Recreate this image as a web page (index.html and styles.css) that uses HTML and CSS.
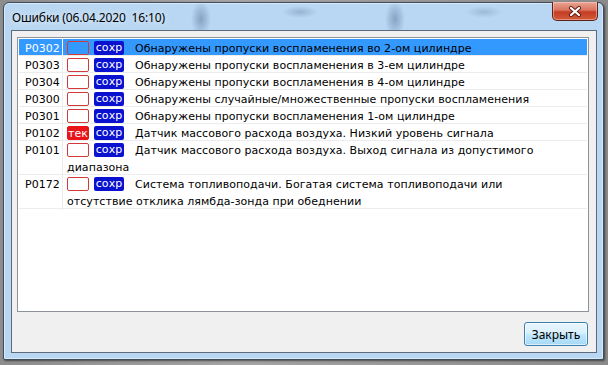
FILE: index.html
```html
<!DOCTYPE html>
<html lang="ru">

<head>
    <meta charset="UTF-8">
    <meta name="viewport" content="width=device-width, initial-scale=1.0">
    <title>Ошибки</title>
    <link rel="stylesheet" href="styles.css">
</head>

<body>
    <div class="window">
        <div class="titlebar">
            <span class="title">Ошибки (06.04.2020&nbsp; 16:10)</span>
            <button class="close" type="button">
                <svg width="14" height="11" viewBox="0 0 14 11">
                    <path d="M3 2 L11 9 M11 2 L3 9" stroke="#5a1d14" stroke-width="4" stroke-linecap="round" />
                    <path d="M3 2 L11 9 M11 2 L3 9" stroke="#fff" stroke-width="2.2" stroke-linecap="round" />
                </svg>
            </button>
        </div>

        <div class="client">
            <div class="listbox">
                <div class="row selected">
                    <div class="code">P0302</div>
                    <div class="desc"><span class="flag"></span><span class="saved">сохр</span>Обнаружены пропуски воспламенения во 2-ом цилиндре</div>
                </div>
                <div class="row">
                    <div class="code">P0303</div>
                    <div class="desc"><span class="flag"></span><span class="saved">сохр</span>Обнаружены пропуски воспламенения в 3-ем цилиндре</div>
                </div>
                <div class="row">
                    <div class="code">P0304</div>
                    <div class="desc"><span class="flag"></span><span class="saved">сохр</span>Обнаружены пропуски воспламенения в 4-ом цилиндре</div>
                </div>
                <div class="row">
                    <div class="code">P0300</div>
                    <div class="desc"><span class="flag"></span><span class="saved">сохр</span>Обнаружены случайные/множественные пропуски воспламенения</div>
                </div>
                <div class="row">
                    <div class="code">P0301</div>
                    <div class="desc"><span class="flag"></span><span class="saved">сохр</span>Обнаружены пропуски воспламенения 1-ом цилиндре</div>
                </div>
                <div class="row">
                    <div class="code">P0102</div>
                    <div class="desc"><span class="flag current">тек</span><span class="saved">сохр</span>Датчик массового расхода воздуха. Низкий уровень сигнала</div>
                </div>
                <div class="row">
                    <div class="code">P0101</div>
                    <div class="desc"><span class="flag"></span><span class="saved">сохр</span>Датчик массового расхода воздуха. Выход сигнала из допустимого диапазона</div>
                </div>
                <div class="row">
                    <div class="code">P0172</div>
                    <div class="desc"><span class="flag"></span><span class="saved">сохр</span>Система топливоподачи. Богатая система топливоподачи или отсутствие отклика лямбда-зонда при обеднении</div>
                </div>
            </div>

            <div class="footer">
                <button class="btn" type="button">Закрыть</button>
            </div>
        </div>
    </div>
</body>

</html>
```

FILE: styles.css
```css
/* General Styles */
body {
    margin: 0;
    width: 608px;
    height: 365px;
    overflow: hidden;
    background: linear-gradient(90deg, #8d8d8d 0%, #a4a4a4 40%, #8a8a8a 100%);
}

.window {
    margin: 2px 0 0 3px;
    width: 601px;
    height: 358px;
    box-sizing: border-box;
    border: 1px solid #3f4d5c;
    border-radius: 6px 6px 2px 2px;
    padding: 0 6px 6px 7px;
    display: flex;
    flex-direction: column;
    box-shadow: 1px 1px 2px rgba(0, 0, 0, 0.5), inset 0 0 0 1px rgba(255, 255, 255, 0.45);
    background:
        radial-gradient(ellipse 10px 18px at 197px 16px, rgba(70, 100, 140, 0.45), transparent),
        radial-gradient(ellipse 10px 18px at 391px 16px, rgba(70, 100, 140, 0.45), transparent),
        radial-gradient(ellipse 18px 6px at 296px 9px, rgba(70, 100, 140, 0.3), transparent),
        radial-gradient(ellipse 18px 6px at 480px 9px, rgba(70, 100, 140, 0.25), transparent),
        #b9d7f2;
}

/* Title bar */
.titlebar {
    height: 27px;
    flex-shrink: 0;
    display: flex;
    justify-content: space-between;
    align-items: flex-start;
}

.title {
    font-family: 'Noto Sans', Arial, sans-serif;
    font-size: 12px;
    line-height: 16px;
    letter-spacing: -0.15px;
    color: #000;
    margin: 7px 0 0 1px;
    text-shadow: 0 0 6px rgba(255, 255, 255, 0.9);
}

.close {
    width: 46px;
    height: 19px;
    margin: -1px -1px 0 0;
    padding: 0;
    border: 1px solid #5e2218;
    border-top: none;
    border-radius: 0 0 5px 5px;
    display: flex;
    align-items: center;
    justify-content: center;
    background: linear-gradient(#e8a596 0%, #d9745f 45%, #c53c22 55%, #d25a3b 100%);
    box-shadow: inset 0 0 0 1px rgba(255, 220, 210, 0.45);
}

/* Client area */
.client {
    flex: 1;
    border: 1px solid #5b6b7c;
    background-color: #f0f0f0;
    display: flex;
    flex-direction: column;
}

.listbox {
    margin: 6px 7px 0 5px;
    height: 275px;
    box-sizing: border-box;
    border: 1px solid #8e939a;
    background-color: #fff;
    padding: 1px;
    font-family: 'DejaVu Sans', Verdana, sans-serif;
    font-size: 11px;
    line-height: 17px;
    letter-spacing: 0.05px;
    color: #000;
}

.row {
    display: flex;
    box-shadow: inset 0 -1px #ececec;
}

.row.selected {
    background-color: #3399ff;
    color: #fff;
}

.code {
    width: 44px;
    flex-shrink: 0;
    box-sizing: border-box;
    padding: 1px 0 0 6px;
    margin-bottom: -1px;
    box-shadow: inset -1px 0 #ececec;
}

.row.selected .code {
    box-shadow: inset -1px 0 #fff;
}

.desc {
    flex: 1;
    padding: 1px 32px 0 4px;
    margin-bottom: -1px;
}

.row.selected .desc {
    color: #000;
}

.flag,
.saved {
    display: inline-block;
    vertical-align: top;
    height: 14px;
    margin-top: 1px;
    box-sizing: border-box;
    line-height: 13px;
    text-align: center;
    color: #fff;
    border-radius: 2px;
}

.flag {
    width: 22px;
    margin-right: 5px;
    border: 1px solid #d23a3a;
    background-color: #fff;
}

.row.selected .flag {
    background-color: transparent;
}

.flag.current {
    background-color: #e8141a;
    border-color: #e8141a;
}

.saved {
    width: 30px;
    margin-right: 11px;
    background-color: #0a12d0;
}

/* Footer */
.footer {
    display: flex;
    justify-content: flex-end;
    margin: 10px 8px 0 0;
}

.btn {
    width: 64px;
    height: 24px;
    padding: 0;
    font-family: 'Noto Sans', Arial, sans-serif;
    font-size: 12px;
    color: #000;
    border: 1px solid #3c7fb1;
    border-radius: 3px;
    background: linear-gradient(#eaf6fd 0%, #d9f0fc 45%, #bee6fd 55%, #a7d9f5 100%);
    box-shadow: inset 0 0 0 1px rgba(255, 255, 255, 0.6);
}
```
